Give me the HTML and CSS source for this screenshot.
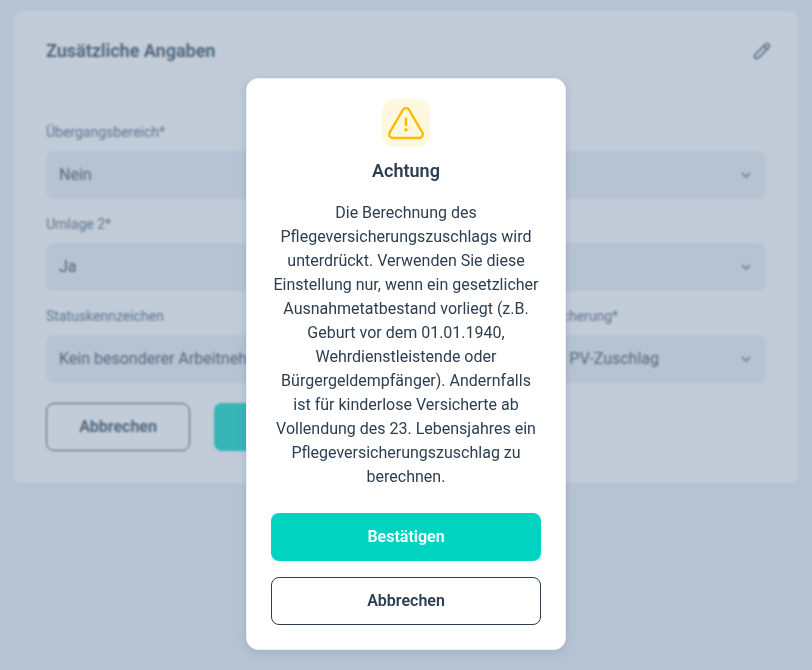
FILE: index.html
```html
<!DOCTYPE html>
<html lang="de">
<head>
  <meta charset="utf-8">
  <meta name="viewport" content="width=device-width, initial-scale=1">
  <title>Zusätzliche Angaben</title>
  <link rel="stylesheet" href="styles.css">
</head>
<body>
  <main class="card">
    <div class="card-header">
      <h1 class="card-title">Zusätzliche Angaben</h1>
      <button type="button" class="edit-button" aria-label="Bearbeiten">
        <svg width="20" height="20" viewBox="0 0 20 20" fill="none" stroke="currentColor" stroke-width="1.8" stroke-linecap="round" stroke-linejoin="round">
          <path d="M3.2 13.6L13.4 3.4a2.2 2.2 0 0 1 3.2 3.2L6.4 16.8a2 2 0 0 1-1.4.6H3.4a.8.8 0 0 1-.8-.8V15a2 2 0 0 1 .6-1.4zM11.8 5l3.2 3.2"/>
        </svg>
      </button>
    </div>
    <form class="card-body">
      <div class="form-grid">
        <div class="form-group">
          <label for="transition">Übergangsbereich*</label>
          <div class="select-box">
            <select id="transition"><option>Nein</option></select>
            <svg class="chevron" width="12" height="8" viewBox="0 0 12 8"><path d="M2 2l4 4 4-4"/></svg>
          </div>
        </div>
        <div class="form-group">
          <label for="levy1">Umlage 1*</label>
          <div class="select-box">
            <select id="levy1"><option>Ja</option></select>
            <svg class="chevron" width="12" height="8" viewBox="0 0 12 8"><path d="M2 2l4 4 4-4"/></svg>
          </div>
        </div>
        <div class="form-group">
          <label for="levy2">Umlage 2*</label>
          <div class="select-box">
            <select id="levy2"><option>Ja</option></select>
            <svg class="chevron" width="12" height="8" viewBox="0 0 12 8"><path d="M2 2l4 4 4-4"/></svg>
          </div>
        </div>
        <div class="form-group">
          <label for="insolvency">Insolvenzumlage*</label>
          <div class="select-box">
            <select id="insolvency"><option>Ja</option></select>
            <svg class="chevron" width="12" height="8" viewBox="0 0 12 8"><path d="M2 2l4 4 4-4"/></svg>
          </div>
        </div>
        <div class="form-group">
          <label for="status">Statuskennzeichen</label>
          <div class="select-box">
            <select id="status"><option>Kein besonderer Arbeitnehmer</option></select>
            <svg class="chevron" width="12" height="8" viewBox="0 0 12 8"><path d="M2 2l4 4 4-4"/></svg>
          </div>
        </div>
        <div class="form-group">
          <label for="care">Zuschlag z. Pflegeversicherung*</label>
          <div class="select-box">
            <select id="care"><option>Unterdrückung des PV-Zuschlag</option></select>
            <svg class="chevron" width="12" height="8" viewBox="0 0 12 8"><path d="M2 2l4 4 4-4"/></svg>
          </div>
        </div>
      </div>
      <div class="form-actions">
        <button type="button" class="btn btn-outline">Abbrechen</button>
        <button type="submit" class="btn btn-primary">Speichern</button>
      </div>
    </form>
  </main>

  <div class="overlay">
    <div class="modal" role="alertdialog" aria-modal="true" aria-labelledby="modal-title" aria-describedby="modal-text">
      <div class="modal-icon">
        <svg width="40" height="40" viewBox="0 0 40 40" fill="none" stroke="currentColor" stroke-width="2.4" stroke-linecap="round" stroke-linejoin="round">
          <path d="M16.9 6.9a3.6 3.6 0 0 1 6.2 0l13.3 22.7a3.6 3.6 0 0 1-3.1 5.4H6.7a3.6 3.6 0 0 1-3.1-5.4z"/>
          <path d="M20 15.6v6.4" stroke-width="2.6"/>
          <circle cx="20" cy="26.8" r="1.8" fill="currentColor" stroke="none"/>
        </svg>
      </div>
      <h2 class="modal-title" id="modal-title">Achtung</h2>
      <p class="modal-text" id="modal-text">Die Berechnung des Pflegeversicherungszuschlags wird unterdrückt. Verwenden Sie diese Einstellung nur, wenn ein gesetzlicher Ausnahmetatbestand vorliegt (z.B. Geburt vor dem 01.01.1940, Wehrdienstleistende oder Bürgergeldempfänger). Andernfalls ist für kinderlose Versicherte ab Vollendung des 23. Lebensjahres ein Pflegeversicherungszuschlag zu berechnen.</p>
      <div class="modal-actions">
        <button type="button" class="btn btn-primary">Bestätigen</button>
        <button type="button" class="btn btn-outline">Abbrechen</button>
      </div>
    </div>
  </div>
</body>
</html>
```

FILE: styles.css
```css
* {
  box-sizing: border-box;
}

body {
  margin: 0;
  padding: 11px 14px;
  font-family: Roboto, sans-serif;
  font-size: 16px;
  color: #2c3e50;
  background-color: #ebeff6;
}

.card {
  background-color: #fff;
  border-radius: 8px;
}

.card-header {
  display: flex;
  justify-content: space-between;
  align-items: center;
  height: 80px;
  padding: 0 26px 0 32px;
  border-bottom: 1px solid #f2f5f9;
}

.card-title {
  margin: 0;
  font-size: 18px;
  line-height: 24px;
  font-weight: 600;
}

.edit-button {
  display: flex;
  padding: 0;
  border: none;
  background: none;
  color: #4f5f72;
  cursor: pointer;
}

.card-body {
  padding: 32px;
}

.form-grid {
  display: grid;
  grid-template-columns: 1fr 1fr;
  gap: 16px 24px;
}

.form-group label {
  display: block;
  margin-bottom: 10px;
  font-size: 14px;
  line-height: 18px;
  color: #56657a;
}

.select-box {
  position: relative;
}

.select-box select {
  display: block;
  width: 100%;
  height: 48px;
  padding: 0 36px 2px 13px;
  border: none;
  border-radius: 8px;
  background-color: #ebeff6;
  color: #3f4a57;
  font: inherit;
  appearance: none;
}

.chevron {
  position: absolute;
  top: 20px;
  right: 14px;
  fill: none;
  stroke: #7d8998;
  stroke-width: 2;
  pointer-events: none;
}

.form-actions {
  display: flex;
  gap: 24px;
  margin-top: 20px;
}

.form-actions .btn {
  width: 144px;
}

.btn {
  height: 48px;
  padding: 0 6px 2px;
  border: 1px solid transparent;
  border-radius: 8px;
  font: inherit;
  font-weight: 600;
  cursor: pointer;
}

.btn-primary {
  background-color: #00d4c0;
  color: #fff;
}

.btn-outline {
  border-color: #2c3e50;
  background-color: #fff;
  color: #2c3e50;
}

.overlay {
  position: fixed;
  inset: 0;
  display: flex;
  justify-content: center;
  align-items: flex-start;
  padding: 78px 16px 20px;
  overflow-y: auto;
  background-color: rgba(120, 144, 170, 0.46);
  backdrop-filter: blur(1px);
}

.modal {
  width: 100%;
  max-width: 320px;
  padding: 20px 24px 24px;
  border: 1px solid #ebeff6;
  border-radius: 12px;
  background-color: #fff;
  box-shadow: 0 2px 10px rgba(90, 105, 150, 0.25);
  text-align: center;
}

.modal-icon {
  display: flex;
  justify-content: center;
  align-items: center;
  width: 48px;
  height: 48px;
  margin: 0 auto 12px;
  border-radius: 12px;
  background-color: #fff8e0;
  color: #ffbb00;
}

.modal-title {
  margin: 0 0 18px;
  font-size: 18px;
  line-height: 24px;
  font-weight: 600;
}

.modal-text {
  margin: 0 0 24px;
  line-height: 24px;
}

.modal-actions {
  display: flex;
  flex-direction: column;
  gap: 16px;
}
```
